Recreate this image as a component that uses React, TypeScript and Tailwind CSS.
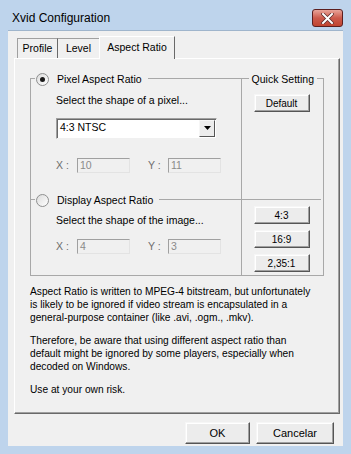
import { useState } from "react";

const font = { fontFamily: '"Liberation Sans", Arial, sans-serif' };

const Radio = ({ checked }: { checked: boolean }) => (
  <span className="flex h-[13px] w-[13px] items-center justify-center rounded-full border border-[#8e8f8f] bg-gradient-to-br from-[#dcdcdc] to-white">
    {checked && <span className="h-[5px] w-[5px] rounded-full bg-[#1a1a1a]" />}
  </span>
);

const WinButton = ({ label, className = "" }: { label: string; className?: string }) => (
  <button
    className={`flex items-center justify-center border border-t-[#f6f6f6] border-l-[#f6f6f6] border-r-[#555] border-b-[#555] bg-[#ececec] text-[10px] text-black shadow-[inset_-1px_-1px_0_#a0a0a0,inset_1px_1px_0_#fff] ${className}`}
  >
    {label}
  </button>
);

const FieldBox = ({ value }: { value: string }) => (
  <div className="flex h-[15px] w-[53px] items-center border border-t-[#a0a0a0] border-l-[#a0a0a0] border-r-[#e3e3e3] border-b-[#e3e3e3] bg-[#f0f0f0] pl-[2px] text-[10.5px] text-[#8a8a8a]">
    {value}
  </div>
);

const XYRow = ({ x, y }: { x: string; y: string }) => (
  <div className="flex items-center text-[10.5px] text-[#6d6d6d]">
    <span className="w-[21px]">X :</span>
    <FieldBox value={x} />
    <span className="ml-[18px] w-[20px]">Y :</span>
    <FieldBox value={y} />
  </div>
);

export default function App() {
  const [pixel] = useState(true);

  return (
    <div className="flex h-[454px] w-[351px] flex-col bg-[#bed4ec] text-black" style={font}>
      {/* title bar */}
      <div className="flex h-[30px] items-start justify-between pl-[12px] pr-[8px]">
        <span className="mt-[9px] text-[12px] text-black">Xvid Configuration</span>
        <div className="mt-[9px] flex h-[18px] w-[31px] items-center justify-center rounded-[3px] border border-[#5c1f1f] bg-gradient-to-b from-[#e8a49a] via-[#cc5a4c] to-[#c0442f]">
          <svg width="13" height="11" viewBox="0 0 13 11">
            <path d="M2 1 L11 10 M11 1 L2 10" stroke="#5a2a2a" strokeWidth="3.4" strokeLinecap="square" />
            <path d="M2 1 L11 10 M11 1 L2 10" stroke="#fff" strokeWidth="2" strokeLinecap="square" />
          </svg>
        </div>
      </div>

      {/* client area */}
      <div className="mx-[8px] mb-[8px] flex flex-1 flex-col border-t border-[#9fb5cc] bg-[#f0f0f0]">
        {/* tabs */}
        <div className="relative z-10 ml-[9px] mt-[5px] flex items-end text-[10.5px]">
          <div className="flex h-[20px] w-[41px] items-center justify-center border border-b-0 border-[#a0a0a0] border-r-[#696969] bg-[#f0f0f0]">Profile</div>
          <div className="flex h-[20px] w-[42px] items-center justify-center border border-b-0 border-l-0 border-[#a0a0a0] border-r-[#696969] bg-[#f0f0f0]">Level</div>
          <div className="-mb-[1px] -ml-[1px] flex h-[23px] w-[76px] items-start justify-center border border-b-0 border-t-white border-l-white border-r-[#696969] bg-[#f0f0f0] pt-[3px]">
            Aspect Ratio
          </div>
        </div>

        {/* tab page */}
        <div className="ml-[6px] mr-[3px] flex h-[356px] flex-col border border-t-white border-l-white border-r-[#696969] border-b-[#696969] shadow-[inset_-1px_-1px_0_#a0a0a0] px-[15px] pt-[19px]">
          <div className="relative grid h-[198px] grid-cols-[211px_79px] grid-rows-[121px_76px] border border-[#a8a8a8]">
            {/* pixel aspect ratio */}
            <div className="relative border-r border-b border-[#a8a8a8] pl-[25px] pt-[14px]">
              <div className="absolute -top-[7px] left-[4px] flex items-center gap-[8px] bg-[#f0f0f0] pl-[1px] pr-[6px] text-[10.5px]">
                <Radio checked={pixel} />
                <span>Pixel Aspect Ratio</span>
              </div>
              <div className="text-[10.5px]">Select the shape of a pixel...</div>
              <div className="mt-[9px] flex h-[21px] w-[161px] items-center border border-t-[#a0a0a0] border-l-[#a0a0a0] border-r-[#f0f0f0] border-b-[#f0f0f0] bg-white shadow-[inset_1px_1px_0_#696969]">
                <span className="flex-1 pl-[3px] text-[10.5px]">4:3 NTSC</span>
                <div className="mr-[1px] flex h-[17px] w-[16px] items-center justify-center border border-t-[#f6f6f6] border-l-[#f6f6f6] border-r-[#555] border-b-[#555] bg-[#ececec]">
                  <svg width="7" height="4" viewBox="0 0 7 4">
                    <path d="M0 0 H7 L3.5 4 Z" fill="#000" />
                  </svg>
                </div>
              </div>
              <div className="mt-[19px]">
                <XYRow x="10" y="11" />
              </div>
            </div>

            {/* quick setting */}
            <div className="relative flex flex-col items-center border-b border-[#a8a8a8] pt-[15px]">
              <div className="absolute -top-[7px] right-[4px] bg-[#f0f0f0] px-[3px] text-[10.5px]">Quick Setting</div>
              <WinButton label="Default" className="h-[18px] w-[56px] text-[10.5px]" />
            </div>

            {/* display aspect ratio */}
            <div className="relative border-r border-[#a8a8a8] pl-[25px] pt-[13px]">
              <div className="absolute -top-[7px] left-[4px] flex items-center gap-[8px] bg-[#f0f0f0] pl-[1px] pr-[6px] text-[10.5px]">
                <Radio checked={!pixel} />
                <span>Display Aspect Ratio</span>
              </div>
              <div className="text-[10.5px]">Select the shape of the image...</div>
              <div className="mt-[10px]">
                <XYRow x="4" y="3" />
              </div>
            </div>

            <div className="flex flex-col items-center gap-[6px] pt-[6px]">
              <WinButton label="4:3" className="h-[18px] w-[56px] text-[10.5px]" />
              <WinButton label="16:9" className="h-[18px] w-[56px] text-[10.5px]" />
              <WinButton label="2,35:1" className="h-[18px] w-[56px] text-[10.5px]" />
            </div>
          </div>

          <div className="mt-[9px] flex flex-col gap-[10px] whitespace-nowrap text-[10.2px] leading-[13px]">
            <p>
              Aspect Ratio is written to MPEG-4 bitstream, but unfortunately
              <br />
              is likely to be ignored if video stream is encapsulated in a
              <br />
              general-purpose container (like .avi, .ogm., .mkv).
            </p>
            <p>
              Therefore, be aware that using different aspect ratio than
              <br />
              default might be ignored by some players, especially when
              <br />
              decoded on Windows.
            </p>
            <p>Use at your own risk.</p>
          </div>
        </div>

        {/* dialog buttons */}
        <div className="mr-[9px] mt-[8px] flex justify-end gap-[6px]">
          <WinButton label="OK" className="h-[22px] w-[65px] text-[11px]" />
          <WinButton label="Cancelar" className="h-[22px] w-[78px] text-[11px]" />
        </div>
      </div>
    </div>
  );
}
